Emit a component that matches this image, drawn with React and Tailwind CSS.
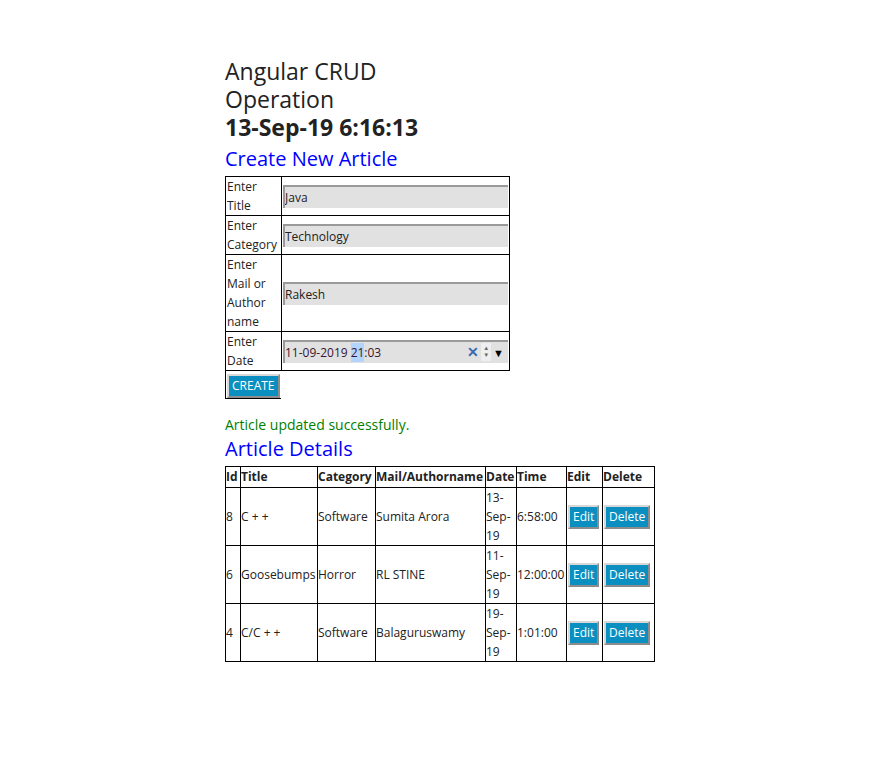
import { useState } from "react";

const articles = [
  { id: 8, title: "C + +", category: "Software", author: "Sumita Arora", date: "13-Sep-19", time: "6:58:00" },
  { id: 6, title: "Goosebumps", category: "Horror", author: "RL STINE", date: "11-Sep-19", time: "12:00:00" },
  { id: 4, title: "C/C + +", category: "Software", author: "Balaguruswamy", date: "19-Sep-19", time: "1:01:00" },
];

const font = { fontFamily: '"Segoe UI", "Open Sans", "Noto Sans", sans-serif' };

function Field({ value }) {
  return (
    <input
      defaultValue={value}
      className="w-[225px] h-[23px] bg-[#e1e1e1] border-t-2 border-l-2 border-[#9a9a9a] pl-0 text-[12px] text-[#222] outline-none"
    />
  );
}

function Btn({ children }) {
  return (
    <button className="bg-[#0a8fc0] text-white text-[12px] leading-[16px] px-[3px] py-[2px] border-2 border-t-[#d8d8d8] border-l-[#d8d8d8] border-r-[#8c8c8c] border-b-[#8c8c8c]">
      {children}
    </button>
  );
}

export default function App() {
  const [list] = useState(articles);

  return (
    <div className="min-h-[781px] bg-white pl-[225px] pt-[57px] text-[#222]" style={font}>
      {/* HEADER */}
      <div className="w-[200px] text-[23px] leading-[28px]">
        <div>Angular CRUD Operation</div>
        <div className="font-bold whitespace-nowrap">13-Sep-19 6:16:13</div>
      </div>
      <h3 className="text-[20px] leading-[28px] text-[#0000ff] mt-[4px]">Create New Article</h3>

      {/* FORM */}
      <table className="border-collapse text-[12px] leading-[19px] w-[285px] mt-[3px]">
        <tbody>
          <tr>
            <td className="border border-black w-[56px] align-top px-[1px]">Enter<br />Title</td>
            <td className="border border-black px-[1px]"><Field value="Java" /></td>
          </tr>
          <tr>
            <td className="border border-black align-top px-[1px]">Enter<br />Category</td>
            <td className="border border-black px-[1px]"><Field value="Technology" /></td>
          </tr>
          <tr>
            <td className="border border-black align-top px-[1px]">Enter<br />Mail or<br />Author<br />name</td>
            <td className="border border-black px-[1px]"><Field value="Rakesh" /></td>
          </tr>
          <tr>
            <td className="border border-black align-top px-[1px]">Enter<br />Date</td>
            <td className="border border-black px-[1px]">
              <div className="w-[225px] h-[23px] bg-[#e1e1e1] border-t-2 border-l-2 border-[#9a9a9a] flex items-center text-[12px] text-[#3a1530]">
                <span>11-09-2019 </span>
                <span className="bg-[#b3d4fc] ml-[3px]">21</span>
                <span>:03</span>
                <span className="ml-auto text-[#3b6ab0] font-bold text-[14px] leading-none">✕</span>
                <span className="flex flex-col items-center justify-center w-[10px] h-[18px] bg-[#efefef] text-[#666] text-[6px] leading-[7px] mx-[2px]">
                  <span>▲</span>
                  <span>▼</span>
                </span>
                <span className="text-black text-[11px] mr-[4px]">▼</span>
              </div>
            </td>
          </tr>
        </tbody>
      </table>
      <div className="border border-black border-t-0 border-r-0 p-[1px] pb-0 w-fit">
        <Btn>CREATE</Btn>
      </div>

      {/* STATUS */}
      <p className="text-[14px] leading-[20px] text-[#008000] mt-[16px]">Article updated successfully.</p>
      <h3 className="text-[20px] leading-[26px] text-[#0000ff] mt-[1px]">Article Details</h3>

      {/* LIST */}
      <table className="border-collapse text-[12px] leading-[19px] mt-[4px]">
        <thead>
          <tr className="font-bold text-left leading-[20px]">
            <th className="border border-black w-[15px]">Id</th>
            <th className="border border-black w-[77px]">Title</th>
            <th className="border border-black w-[58px]">Category</th>
            <th className="border border-black w-[110px]">Mail/Authorname</th>
            <th className="border border-black w-[31px]">Date</th>
            <th className="border border-black w-[50px]">Time</th>
            <th className="border border-black w-[36px]">Edit</th>
            <th className="border border-black w-[52px]">Delete</th>
          </tr>
        </thead>
        <tbody>
          {list.map((a) => (
            <tr key={a.id}>
              <td className="border border-black">{a.id}</td>
              <td className="border border-black">{a.title}</td>
              <td className="border border-black">{a.category}</td>
              <td className="border border-black">{a.author}</td>
              <td className="border border-black">
                {a.date.split("-").map((p, i, arr) => (
                  <div key={i}>{p}{i < arr.length - 1 ? "-" : ""}</div>
                ))}
              </td>
              <td className="border border-black">{a.time}</td>
              <td className="border border-black px-[1px]"><Btn>Edit</Btn></td>
              <td className="border border-black px-[1px]"><Btn>Delete</Btn></td>
            </tr>
          ))}
        </tbody>
      </table>
    </div>
  );
}
